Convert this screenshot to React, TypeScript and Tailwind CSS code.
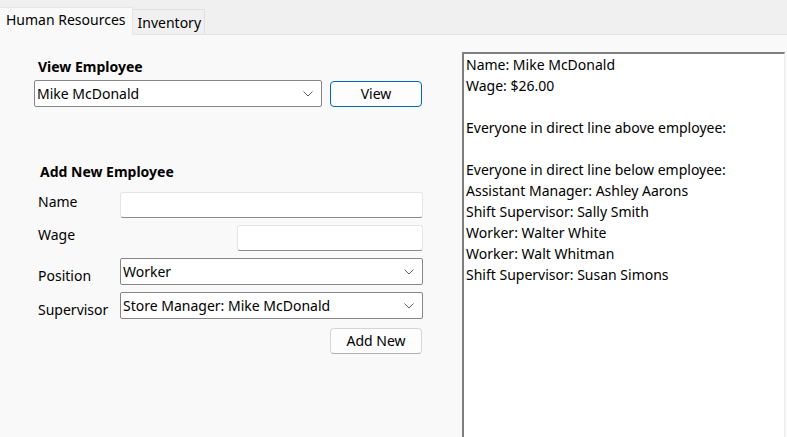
import React from 'react';

function Chevron() {
  return (
    <svg width="10" height="6" viewBox="0 0 10 6" className="shrink-0">
      <path d="M0.5 0.5 L5 5 L9.5 0.5" fill="none" stroke="#606060" strokeWidth="1" />
    </svg>
  );
}

function Combo({ value, className }: { value: string; className: string }) {
  return (
    <div
      className={`flex items-center justify-between bg-white border border-[#868686] rounded-[2px] pl-[2px] pr-[8px] ${className}`}
    >
      <span className="leading-[20px]">{value}</span>
      <Chevron />
    </div>
  );
}

function TextInput({ className }: { className: string }) {
  return (
    <div
      className={`bg-white border border-[#e5e5e5] border-b-[#8a8a8a] rounded-[3px] ${className}`}
    />
  );
}

const details = [
  'Name: Mike McDonald',
  'Wage: $26.00',
  '',
  'Everyone in direct line above employee:',
  '',
  'Everyone in direct line below employee:',
  'Assistant Manager: Ashley Aarons',
  'Shift Supervisor: Sally Smith',
  'Worker: Walter White',
  'Worker: Walt Whitman',
  'Shift Supervisor: Susan Simons',
];

export default function App() {
  return (
    <div className="w-[787px] h-[437px] overflow-hidden bg-[#f9f9f9] font-['Noto_Sans',sans-serif] text-[14px] text-black flex flex-col">
      {/* Tabs */}
      <div className="h-[35px] shrink-0 bg-[#f0f0f0] border-b border-[#e5e5e5] flex items-end">
        <div className="h-[28px] -mb-px px-[6px] bg-[#f9f9f9] border-r border-t border-[#e5e5e5] leading-[24px]">
          Human Resources
        </div>
        <div className="h-[25px] pl-[5px] pr-[3px] bg-[#f0f0f0] border-r border-t border-[#e0e0e0] leading-[26px]">
          Inventory
        </div>
      </div>

      <div className="flex-1 flex min-h-0">
        {/* Left form */}
        <div className="w-[462px] shrink-0 flex flex-col">
          <div className="mt-[22px] ml-[38px] font-bold leading-[20px]">View Employee</div>
          <div className="mt-[3px] ml-[34px] flex items-center gap-[8px]">
            <Combo value="Mike McDonald" className="w-[288px] h-[27px]" />
            <button className="w-[92px] h-[26px] bg-[#fdfdfd] border border-[#0067c0] rounded-[4px] leading-[20px]">
              View
            </button>
          </div>

          <div className="mt-[55px] ml-[40px] font-bold leading-[20px]">Add New Employee</div>

          <div className="mt-[10px] ml-[38px] w-[385px] flex items-start justify-between">
            <span className="leading-[20px]">Name</span>
            <TextInput className="w-[303px] h-[26px]" />
          </div>
          <div className="mt-[7px] ml-[38px] w-[385px] flex items-start justify-between">
            <span className="leading-[20px]">Wage</span>
            <TextInput className="w-[186px] h-[26px]" />
          </div>
          <div className="mt-[7px] ml-[38px] w-[385px] flex items-start justify-between">
            <span className="leading-[20px] mt-[8px]">Position</span>
            <Combo value="Worker" className="w-[303px] h-[27px]" />
          </div>
          <div className="mt-[6px] ml-[38px] w-[385px] flex items-start justify-between">
            <span className="leading-[20px] mt-[8px]">Supervisor</span>
            <Combo value="Store Manager: Mike McDonald" className="w-[303px] h-[27px]" />
          </div>
          <div className="mt-[8px] ml-[330px]">
            <button className="w-[92px] h-[26px] bg-[#fdfdfd] border border-[#d5d5d5] border-b-[#b0b0b0] rounded-[4px] leading-[20px]">
              Add New
            </button>
          </div>
        </div>

        {/* Details box */}
        <div className="flex-1 mt-[17px] mr-[2px] bg-white border-l-2 border-t-2 border-r border-[#7f7f7f] border-r-[#ececec] pl-[2px]">
          {details.map((line, i) => (
            <div key={i} className="h-[21px] leading-[21px] whitespace-pre">
              {line}
            </div>
          ))}
        </div>
      </div>
    </div>
  );
}
